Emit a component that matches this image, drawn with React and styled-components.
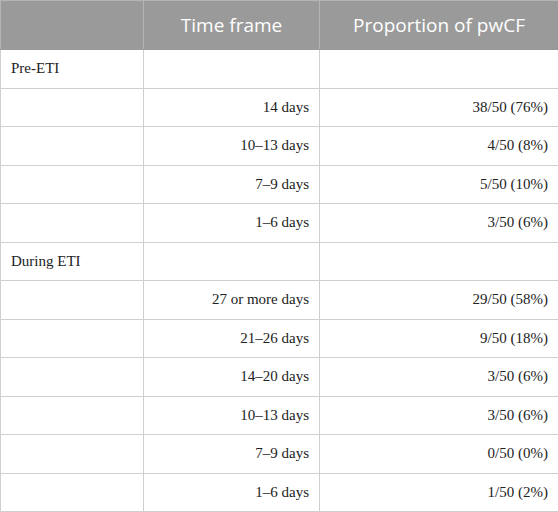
import React from "react"
import styled, { createGlobalStyle } from "styled-components"

const Global = createGlobalStyle`
  body {
    margin: 0;
    background: #fff;
  }
`

const Table = styled.table`
  width: 558px;
  border-collapse: collapse;
  table-layout: fixed;
`

const HeadCell = styled.th`
  background: #9a9a9a;
  color: #fff;
  font-family: "Open Sans", sans-serif;
  font-weight: 400;
  font-size: 19px;
  text-align: center;
  height: 48px;
  padding: 0 10px;
  border: 1px solid #b4b4b4;
  border-bottom-color: #9a9a9a;
`

const Cell = styled.td`
  font-family: "Liberation Serif", serif;
  font-size: 15px;
  color: #222;
  height: 37.5px;
  padding: 0 10px;
  border: 1px solid #cfcfcf;
  text-align: ${(p) => (p.$right ? "right" : "left")};
`

const rows = [
  ["Pre-ETI", "", ""],
  ["", "14 days", "38/50 (76%)"],
  ["", "10–13 days", "4/50 (8%)"],
  ["", "7–9 days", "5/50 (10%)"],
  ["", "1–6 days", "3/50 (6%)"],
  ["During ETI", "", ""],
  ["", "27 or more days", "29/50 (58%)"],
  ["", "21–26 days", "9/50 (18%)"],
  ["", "14–20 days", "3/50 (6%)"],
  ["", "10–13 days", "3/50 (6%)"],
  ["", "7–9 days", "0/50 (0%)"],
  ["", "1–6 days", "1/50 (2%)"],
]

const App = () => {
  return (
    <>
      <Global />
      <Table>
        <colgroup>
          <col style={{ width: 143 }} />
          <col style={{ width: 176 }} />
          <col style={{ width: 239 }} />
        </colgroup>
        <thead>
          <tr>
            <HeadCell></HeadCell>
            <HeadCell>Time frame</HeadCell>
            <HeadCell>Proportion of pwCF</HeadCell>
          </tr>
        </thead>
        <tbody>
          {rows.map((r, i) => (
            <tr key={i}>
              <Cell>{r[0]}</Cell>
              <Cell $right>{r[1]}</Cell>
              <Cell $right>{r[2]}</Cell>
            </tr>
          ))}
        </tbody>
      </Table>
    </>
  )
}
export default App
